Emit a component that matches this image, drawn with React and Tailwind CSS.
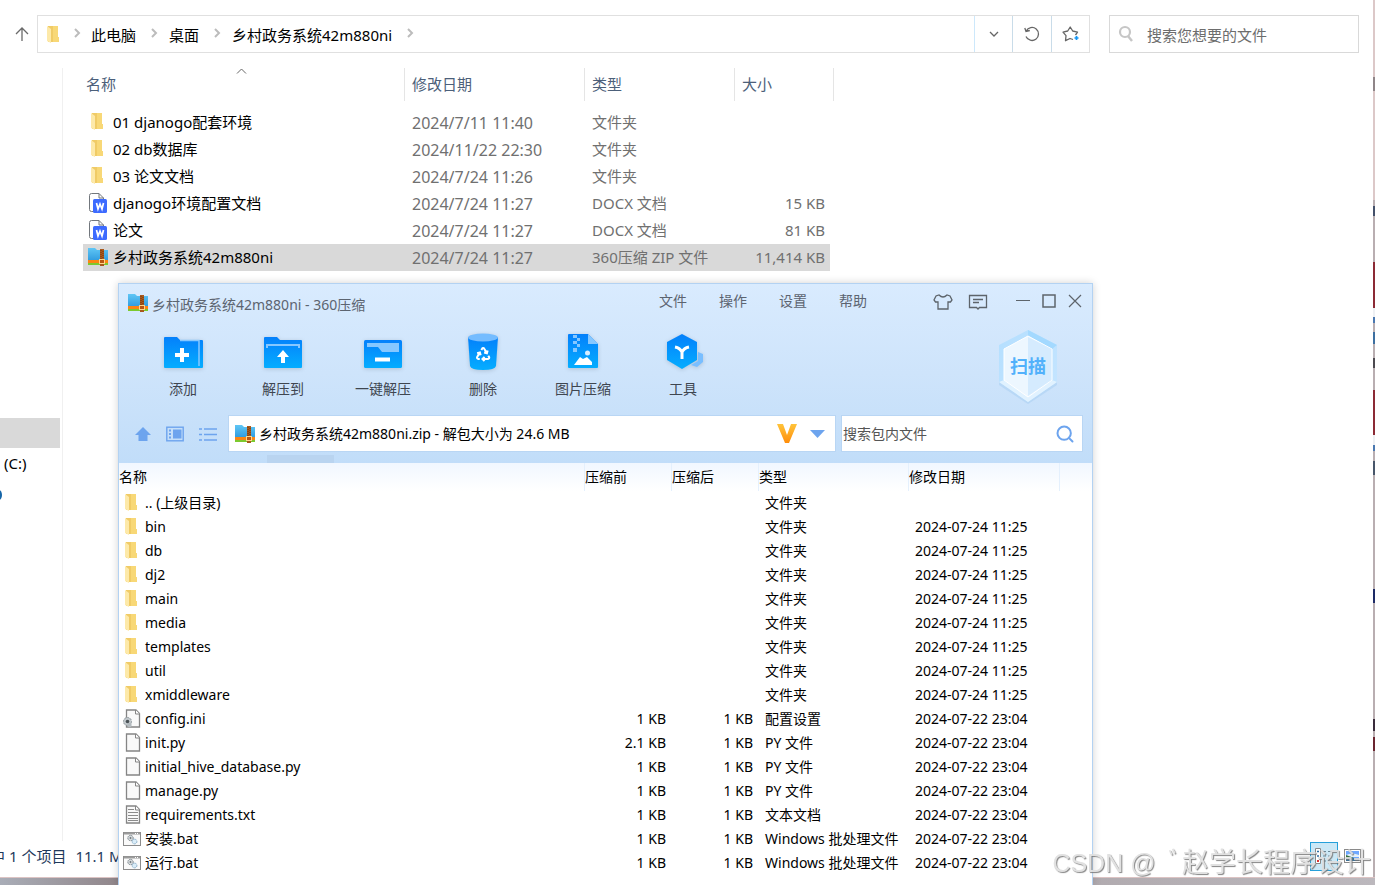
import React, { useState } from 'react';
import { Search } from 'lucide-react';

const explorerRows = [
  { icon: 'folder', name: '01 djanogo配套环境', date: '2024/7/11 11:40', type: '文件夹', size: '' },
  { icon: 'folder', name: '02 db数据库', date: '2024/11/22 22:30', type: '文件夹', size: '' },
  { icon: 'folder', name: '03 论文文档', date: '2024/7/24 11:26', type: '文件夹', size: '' },
  { icon: 'word', name: 'djanogo环境配置文档', date: '2024/7/24 11:27', type: 'DOCX 文档', size: '15 KB' },
  { icon: 'word', name: '论文', date: '2024/7/24 11:27', type: 'DOCX 文档', size: '81 KB' },
  { icon: 'zip', name: '乡村政务系统42m880ni', date: '2024/7/24 11:27', type: '360压缩 ZIP 文件', size: '11,414 KB' },
];

const folder = (name, date = '2024-07-24 11:25') => ({ icon: 'folder', name, before: '', after: '', type: '文件夹', date });
const file = (icon, name, type, before = '1 KB') => ({ icon, name, before, after: '1 KB', type, date: '2024-07-22 23:04' });

const archiveRows = [
  folder('.. (上级目录)', ''),
  folder('bin'),
  folder('db'),
  folder('dj2'),
  folder('main'),
  folder('media'),
  folder('templates'),
  folder('util'),
  folder('xmiddleware'),
  file('config', 'config.ini', '配置设置'),
  file('page', 'init.py', 'PY 文件', '2.1 KB'),
  file('page', 'initial_hive_database.py', 'PY 文件'),
  file('page', 'manage.py', 'PY 文件'),
  file('text', 'requirements.txt', '文本文档'),
  file('bat', '安装.bat', 'Windows 批处理文件'),
  file('bat', '运行.bat', 'Windows 批处理文件'),
];

function FolderIcon() {
  return (
    <svg width="14" height="18" viewBox="0 0 14 18">
      <path d="M1 0H11V11H12V16H1z" fill="#f8d877" />
      <path d="M1 0H6V16H1z" fill="#f0cb66" />
      <path d="M0 0L4 3V17L0 15z" fill="#fde9a9" />
    </svg>
  );
}

function WordIcon() {
  return (
    <svg width="19" height="20" viewBox="0 0 19 20">
      <path d="M5 18.500H2.500Q.500 18.500.500 16.500V2.500Q.500.500 2.500.500H10L14.500 5V7" fill="#fff" stroke="#72777d" />
      <path d="M10 .5V5H14.500" fill="none" stroke="#72777d" />
      <rect x="4" y="6" width="14" height="14" rx="1.500" fill="#3d6bff" />
      <path d="M7.500 10L9 16L11 11L13 16L14.500 10" fill="none" stroke="#fff" strokeWidth="1.700" />
    </svg>
  );
}

function ZipIcon() {
  return (
    <svg width="20" height="19" viewBox="0 0 20 19">
      <defs>
        <linearGradient id="zipBlue" x1="0" y1="0" x2="0" y2="1">
          <stop offset="0" stopColor="#5fc6f5" />
          <stop offset="1" stopColor="#2f9ade" />
        </linearGradient>
      </defs>
      <path d="M0 1H7L9 3H20V14H0z" fill="url(#zipBlue)" />
      <path d="M0 13H20V16H0z" fill="#fb8512" />
      <path d="M0 16H20V18H0z" fill="#7cc92e" />
      <rect x="12" y="2" width="4" height="17" fill="#a8581c" />
      <path d="M13 3V12M15 4V12" stroke="#703509" strokeDasharray="1 1" />
      <rect x="11.500" y="12.500" width="5" height="4" fill="#b95612" stroke="#ffd68a" />
    </svg>
  );
}

function PageIcon({ kind }) {
  return (
    <svg width="18" height="19" viewBox="0 0 18 19" className="mb-0.5">
      <path d="M3.500 1H13L16.500 4.500V18H3.500z" fill="#f9f9f9" stroke="#858585" strokeWidth="1.300" />
      <path d="M12.500 1V5H16.500" fill="#fff" stroke="#858585" />
      {kind === 'text' && <path d="M5 4.500H11M5 7.500H15M5 10.500H15M5 13.500H15M5 15.500H15" stroke="#8b8b8b" />}
      {kind === 'config' && (
        <g>
          <circle cx="4.500" cy="12.500" r="4" fill="#c3c9cd" stroke="#8d969b" strokeDasharray="2 1" />
          <circle cx="4.500" cy="12.500" r="1.800" fill="#4a5256" />
          <circle cx="6.500" cy="16" r="2.200" fill="#b4bbbf" />
        </g>
      )}
    </svg>
  );
}

function BatIcon() {
  return (
    <svg width="18" height="15" viewBox="0 0 18 15">
      <rect x=".5" y=".5" width="17" height="13" fill="#fafafa" stroke="#8c8c8c" />
      <path d="M1 1.500H17" stroke="#9b9b9b" strokeWidth="2" />
      <path d="M12 1.500H16" stroke="#fff" strokeDasharray="1 1" />
      <circle cx="7.500" cy="6" r="2.700" fill="#d4d9dc" stroke="#7d868b" strokeDasharray="1.500 .7" />
      <circle cx="7.500" cy="6" r=".9" fill="#70797d" />
      <circle cx="11.500" cy="9.500" r="2.400" fill="#d9ecf8" stroke="#84aac6" strokeDasharray="1.500 .7" />
    </svg>
  );
}

function FileIcon({ icon }) {
  if (icon === 'folder') return <FolderIcon />;
  if (icon === 'word') return <WordIcon />;
  if (icon === 'zip') return <ZipIcon />;
  if (icon === 'bat') return <BatIcon />;
  return <PageIcon kind={icon} />;
}

function Crumb({ children }) {
  return (
    <span className="flex items-center gap-[14px]">
      <button className="text-black whitespace-nowrap">{children}</button>
      <CrumbArrow />
    </span>
  );
}

function CrumbArrow() {
  return (
    <svg width="8" height="10" viewBox="0 0 8 10" className="shrink-0 mb-1">
      <path d="M2 1L6 5L2 9" fill="none" stroke="#bcbcbc" strokeWidth="2" />
    </svg>
  );
}

function AddressBar() {
  return (
    <div className="h-[68px] pt-[15px] pr-[14px] flex shrink-0 text-[15px]">
      <button aria-label="上移" className="w-[37px] h-[38px] pl-[15px]">
        <svg width="14" height="16" viewBox="0 0 14 16">
          <path d="M7 15V2M1 8L7 2L13 8" fill="none" stroke="#6a6a6a" strokeWidth="1.300" />
        </svg>
      </button>
      <div className="flex-1 h-[38px] flex border border-[#e0e0e0]">
        <div className="flex-1 flex items-center pl-[9px] pt-[2px]">
          <FolderIcon />
          <span className="w-[12px]" />
          <CrumbArrow />
          <span className="flex items-center gap-[11px] pl-[10px]">
            <Crumb>此电脑</Crumb>
            <Crumb>桌面</Crumb>
            <Crumb>乡村政务系统42m880ni</Crumb>
          </span>
        </div>
        <button aria-label="历史记录" className="w-[38px] border-l border-[#cde8fb] grid place-items-center">
          <svg width="10" height="6" viewBox="0 0 10 6">
            <path d="M1 1L5 5L9 1" fill="none" stroke="#666" strokeWidth="1.300" />
          </svg>
        </button>
        <button aria-label="刷新" className="w-[39px] border-l border-[#c9dce9] grid place-items-center">
          <svg width="16" height="16" viewBox="0 0 16 16">
            <path d="M2.200 5A6.500 6.500 0 1 1 2 10.500M.8 2L2 5.500L5.800 4.500" fill="none" stroke="#666" strokeWidth="1.300" />
          </svg>
        </button>
        <button aria-label="收藏" className="w-[38px] border-l border-[#c9dce9] grid place-items-center">
          <svg width="18" height="16" viewBox="0 0 18 16">
            <path d="M11 13.500L8 12.500L3.500 14.700L4 9.700L1 6.200L5.700 5L8.200 1L10.700 5L15.500 6.200L13.500 9" fill="none" stroke="#666" strokeWidth="1.300" strokeLinejoin="round" />
            <path d="M14.500 10V14M12.500 12H16.500" stroke="#1296f5" strokeWidth="1.700" />
          </svg>
        </button>
      </div>
      <label className="ml-[19px] w-[250px] h-[38px] flex items-center border border-[#d9d9d9]">
        <svg width="16" height="18" viewBox="0 0 16 18" className="ml-[8px] shrink-0">
          <circle cx="7" cy="7" r="5" fill="none" stroke="#c6c6c6" strokeWidth="2.200" />
          <path d="M10 11L14 16" stroke="#c6c6c6" strokeWidth="2.400" />
        </svg>
        <input
          aria-label="搜索您想要的文件"
          placeholder="搜索您想要的文件"
          className="min-w-0 flex-1 ml-[13px] pt-[2px] outline-none placeholder:text-[#6d6d6d]"
        />
      </label>
    </div>
  );
}

function ExplorerTable() {
  return (
    <table className="ml-[20px] w-[751px] table-fixed border-separate border-spacing-0 text-[15px] self-start">
      <colgroup>
        <col className="w-[322px]" />
        <col className="w-[180px]" />
        <col className="w-[150px]" />
        <col />
      </colgroup>
      <thead>
        <tr className="h-[33px] text-left text-[#4c607a]">
          <th className="relative p-0 pl-[3px] border-r border-[#e5e5e5] font-normal">
            名称
            <svg width="11" height="6" viewBox="0 0 11 6" className="absolute left-[153px] top-0">
              <path d="M1 5.500L5.500 1L10 5.500" fill="none" stroke="#666" />
            </svg>
          </th>
          <th className="p-0 pl-[7px] border-r border-[#e5e5e5] font-normal">修改日期</th>
          <th className="p-0 pl-[7px] border-r border-[#e5e5e5] font-normal">类型</th>
          <th className="p-0 pl-[7px] border-r border-[#e5e5e5] font-normal">大小</th>
        </tr>
        <tr className="h-[8px]"><td colSpan={4} className="p-0" /></tr>
      </thead>
      <tbody className="text-[#707070]">
        {explorerRows.map((row) => (
          <tr key={row.name} className={row.icon === 'zip' ? 'h-[27px] bg-[#d9d9d9]' : 'h-[27px]'}>
            <td className="p-0">
              <span className="flex items-center text-black whitespace-nowrap">
                <span className="w-[30px] flex justify-center mb-[2px] shrink-0"><FileIcon icon={row.icon} /></span>
                {row.name}
              </span>
            </td>
            <td className="p-0 pl-[7px] text-[16px] leading-5">{row.date}</td>
            <td className="p-0 pl-[7px] whitespace-nowrap">{row.type}</td>
            <td className="p-0 pr-[5px] text-right border-r-4 border-white">{row.size}</td>
          </tr>
        ))}
      </tbody>
    </table>
  );
}

function StatusBar() {
  return (
    <div className="h-9 shrink-0 flex items-center justify-between overflow-hidden pr-[12px] text-[15px] text-[#1e395b]">
      <div className="flex gap-[9px] -ml-[10px] whitespace-nowrap pb-[6px]">
        <span>中 1 个项目</span>
        <span>11.1 MB</span>
      </div>
      <div className="flex items-center gap-[6px] pb-[6px]">
        <button aria-label="详细信息" className="w-[28px] h-[29px] grid place-items-center bg-[#cbe8f6] border border-[#26a0da]">
          <svg width="18" height="17" viewBox="0 0 18 17">
            <path d="M.5.500H5.500V15.500H.500z" fill="#fff" stroke="#888" />
            <path d="M2 3.500H4M2 8H4" stroke="#2d6fa5" strokeWidth="1.500" />
            <path d="M2 13H4" stroke="#d33" strokeWidth="2" />
            <path d="M8 3.500H11M13 3.500H17M8 8H11M13 8H17M8 13H11M13 13H17" stroke="#6d8796" />
          </svg>
        </button>
        <button aria-label="大图标">
          <svg width="17" height="14" viewBox="0 0 17 14">
            <rect x=".5" y=".5" width="16" height="13" fill="#fff" stroke="#8a8a8a" />
            <rect x="2" y="2" width="13" height="10" fill="#6fa8ff" />
            <path d="M2 6Q8 3 15 6V8H2z" fill="#e4f1fa" />
            <path d="M2 6L10 9L2 10z" fill="#37703f" />
            <path d="M2 9H15V12H2z" fill="#3c7298" />
          </svg>
        </button>
      </div>
    </div>
  );
}

function Explorer() {
  return (
    <section className="flex-1 min-w-0 flex flex-col bg-white">
      <AddressBar />
      <div className="flex-1 min-h-0 flex overflow-hidden">
        <nav className="w-[63px] shrink-0 border-r border-[#f0f0f0] pt-[350px] text-[15px] text-black">
          <div className="h-[30px] mr-[2px] bg-[#d9d9d9]" />
          <a href="#c" className="block h-[30px] pl-[4px] pt-[4px]">(C:)</a>
          <svg width="2" height="12" viewBox="0 0 2 12" className="mt-[11px]">
            <ellipse cx="-1" cy="6" rx="3" ry="5" fill="#1565a8" />
          </svg>
        </nav>
        <ExplorerTable />
      </div>
      <StatusBar />
    </section>
  );
}

const tools = [
  {
    label: '添加',
    icon: (
      <g>
        <path d="M2 6Q2 5 3 5H15L18 8H40Q41 8 41 9V35Q41 36 40 36H3Q2 36 2 35z" fill="url(#toolBlue)" />
        <path d="M18 8.500H37V34" fill="none" stroke="#86c7ff" strokeWidth="1.500" />
        <path d="M20 16V30M13 23H27" stroke="#fff" strokeWidth="4" />
      </g>
    ),
  },
  {
    label: '解压到',
    icon: (
      <g>
        <path d="M2 6Q2 5 3 5H15L18 8H39Q40 8 40 9V35Q40 36 39 36H3Q2 36 2 35z" fill="url(#toolBlue)" />
        <path d="M5 16V13H37V16" fill="none" stroke="#86c7ff" strokeWidth="2" />
        <path d="M21 18L27 25H23V31H19V25H15z" fill="#fff" />
      </g>
    ),
  },
  {
    label: '一键解压',
    icon: (
      <g>
        <rect x="2" y="8" width="38" height="28" rx="1.500" fill="url(#toolBlue)" />
        <path d="M5 11H37V20H20L16 15H5z" fill="#86c7ff" />
        <path d="M13 27.500H28" stroke="#fff" strokeWidth="4" />
      </g>
    ),
  },
  {
    label: '删除',
    icon: (
      <g>
        <path d="M6 5H36L34 34Q33 38 21 38Q9 38 8 34z" fill="url(#toolBlue)" />
        <ellipse cx="21" cy="5.500" rx="15" ry="4" fill="#74bcff" />
        <g transform="translate(13 14) scale(.68)" fill="none" stroke="#fff" strokeWidth="3">
          <path d="M7 19H4.800a1.800 1.800 0 0 1-1.600-2.700L7.200 9.500M11 19h8.200a1.800 1.800 0 0 0 1.500-2.700l-1.200-2M14 16l-3 3 3 3M8.300 13.600L7.200 9.500 3.100 10.600M9.300 5.800l1.100-1.900a1.800 1.800 0 0 1 3.200 0l3.900 6.800M13.400 9.600l4.100 1.100 1.100-4.100" />
        </g>
      </g>
    ),
  },
  {
    label: '图片压缩',
    icon: (
      <g>
        <path d="M6 3Q6 2 7 2H26L36 12V35Q36 36 35 36H7Q6 36 6 35z" fill="url(#toolBlue)" />
        <path d="M26 2L36 12H26z" fill="#86c7ff" />
        <path d="M11 3H15V6H11zM15 6H18V9H15zM11 9H15V12H11zM15 12H18V15H15zM11 16H15V20H11z" fill="#86c7ff" />
        <path d="M12 33L18 25L21 27L25 25L30 30V33z" fill="#fff" />
        <circle cx="25.500" cy="21" r="2.500" fill="#d7edff" />
      </g>
    ),
  },
  {
    label: '工具',
    icon: (
      <g>
        <path d="M36 20L41 22V30L35 35L29 33L36 29z" fill="#79beff" />
        <path d="M20 2L35 10V28L20 37L5 28V10z" fill="url(#toolBlue)" />
        <path d="M13 15Q18 16 20 20Q22 16 27 15M20 19V27" fill="none" stroke="#fff" strokeWidth="3" />
      </g>
    ),
  },
];

function TitleBar() {
  return (
    <div className="h-9 shrink-0 flex items-center pl-[9px] pr-[10px] text-[14px] text-[#5c6470]">
      <ZipIcon />
      <span className="ml-[4px] pt-[4px] whitespace-nowrap">乡村政务系统42m880ni - 360压缩</span>
      <div className="ml-auto mr-[66px] pb-[4px] flex gap-8 whitespace-nowrap">
        <button>文件</button>
        <button>操作</button>
        <button>设置</button>
        <button>帮助</button>
      </div>
      <div className="flex items-center text-[#5d646b]">
        <button aria-label="皮肤" className="mr-[15px]">
          <svg width="20" height="16" viewBox="0 0 20 16" fill="none" stroke="currentColor" strokeWidth="1.300">
            <path d="M6 1Q10 5 14 1L17 2L19 6L17.500 8H15V15H5V8H2.500L1 6L3 2z" />
          </svg>
        </button>
        <button aria-label="反馈" className="mr-[28px]">
          <svg width="20" height="16" viewBox="0 0 20 16" fill="none" stroke="currentColor" strokeWidth="1.300">
            <path d="M1.500 1.500H18.500V13.500H11.500L10 15L8.500 13.500H1.500zM5 5.500H15M5 8.500H11" />
          </svg>
        </button>
        <div className="flex gap-[12px] pb-[2px]">
          <button aria-label="最小化">
            <svg width="14" height="14" viewBox="0 0 14 14"><path d="M0 6.500H14" stroke="currentColor" /></svg>
          </button>
          <button aria-label="最大化">
            <svg width="14" height="14" viewBox="0 0 14 14" fill="none"><rect x="1" y="1" width="12" height="12" stroke="currentColor" strokeWidth="1.500" /></svg>
          </button>
          <button aria-label="关闭">
            <svg width="14" height="14" viewBox="0 0 14 14"><path d="M1 1L13 13M13 1L1 13" stroke="currentColor" strokeWidth="1.200" /></svg>
          </button>
        </div>
      </div>
    </div>
  );
}

function Toolbar() {
  return (
    <div className="h-[95px] shrink-0 flex justify-between pl-[14px] pr-[30px] text-[14px] text-[#3f4650]">
      <div className="flex">
        {tools.map((tool) => (
          <button key={tool.label} className="w-[100px] pt-[12px] flex flex-col items-center gap-[5px]">
            <svg width="42" height="42" viewBox="0 0 42 42" className="drop-shadow-sm">
              <defs>
                <linearGradient id="toolBlue" x1="0" y1="0" x2="0" y2="1">
                  <stop offset="0" stopColor="#0480fb" />
                  <stop offset="1" stopColor="#05adff" />
                </linearGradient>
              </defs>
              {tool.icon}
            </svg>
            <span className="leading-5">{tool.label}</span>
          </button>
        ))}
      </div>
      <button className="relative w-[68px] h-[92px] text-[18px] font-bold text-[#52b1fb]">
        <svg width="68" height="92" viewBox="0 0 68 92" className="absolute inset-0">
          <defs>
            <linearGradient id="hexEdge" x1="0" y1="0" x2="1" y2="1">
              <stop offset="0" stopColor="#b4dfff" />
              <stop offset="1" stopColor="#c6e5ff" />
            </linearGradient>
          </defs>
          <path d="M34 14L63 29V65L34 84L5 65V29z" fill="#a5cdf2" opacity=".5" />
          <path d="M34 10L63 25V62L34 82L5 62V25z" fill="url(#hexEdge)" />
          <path d="M34 10L63 25L58 29L34 16z" fill="#a3d9ff" />
          <path d="M5 62L34 82L63 62L58 60L34 76L10 60z" fill="#e6f4ff" opacity=".85" />
          <path d="M34 16L58 29V60L34 77L10 60V29z" fill="#edf7ff" stroke="#fff" />
          <path d="M34 17L57.500 29V60L34 76z" fill="#c7e5fe" opacity=".65" />
        </svg>
        <span className="relative">扫描</span>
      </button>
    </div>
  );
}

function ArchiveAddress() {
  const [path, setPath] = useState('乡村政务系统42m880ni.zip - 解包大小为 24.6 MB');

  return (
    <div className="shrink-0 flex items-center pl-4 pr-[9px] text-[14px]">
      <button aria-label="向上">
        <svg width="16" height="16" viewBox="0 0 16 16"><path d="M8 1L16 9H12.500V15H3.500V9H0z" fill="#6da4ee" /></svg>
      </button>
      <button aria-label="预览" className="ml-[15px]">
        <svg width="18" height="16" viewBox="0 0 18 16">
          <rect x=".8" y="1.200" width="16.400" height="13.600" fill="none" stroke="#6da4ee" strokeWidth="1.400" />
          <path d="M7 3.500H15.500V12.500H7zM3 3.500H5V5.500H3zM3 7H5V9H3zM3 10.500H5V12.500H3z" fill="#6da4ee" />
        </svg>
      </button>
      <button aria-label="列表" className="ml-[15px] mr-[11px]">
        <svg width="18" height="16" viewBox="0 0 18 16">
          <path d="M0 3H3M5 3H18M0 8.500H3M5 8.500H18M0 14H3M5 14H18" stroke="#6da4ee" strokeWidth="1.700" />
        </svg>
      </button>
      <div className="flex-1 h-[37px] flex items-center border border-[#b9d6f4] bg-white pl-[6px] pr-[10px]">
        <ZipIcon />
        <input
          aria-label="路径"
          value={path}
          onChange={(e) => setPath(e.target.value)}
          className="min-w-0 flex-1 ml-[4px] text-black outline-none"
        />
        <svg width="20" height="19" viewBox="0 0 20 19">
          <defs>
            <linearGradient id="vGold" x1="0" y1="0" x2="0" y2="1">
              <stop offset="0" stopColor="#ffc43b" />
              <stop offset="1" stopColor="#ff8d0a" />
            </linearGradient>
          </defs>
          <path d="M0 0H6L10 11L14 0H20L12 19H8z" fill="url(#vGold)" />
        </svg>
        <button aria-label="展开" className="ml-[13px]">
          <svg width="15" height="8" viewBox="0 0 15 8"><path d="M0 0H15L7.500 8z" fill="#6da4ee" /></svg>
        </button>
      </div>
      <label className="ml-[5px] w-[242px] h-[37px] flex items-center border border-[#b9d6f4] bg-white pr-[7px]">
        <input
          aria-label="搜索包内文件"
          placeholder="搜索包内文件"
          className="min-w-0 flex-1 pl-[1px] outline-none placeholder:text-[#555]"
        />
        <Search size={20} strokeWidth={2.4} color="#6da4ee" />
      </label>
    </div>
  );
}

function ArchiveTable() {
  return (
    <table className="w-full table-fixed border-separate border-spacing-0 text-[14px] leading-5 text-black whitespace-nowrap">
      <colgroup>
        <col className="w-[466px]" />
        <col className="w-[87px]" />
        <col className="w-[87px]" />
        <col className="w-[150px]" />
        <col className="w-[151px]" />
        <col />
      </colgroup>
      <thead>
        <tr className="h-[28px] text-left bg-linear-to-b from-[#f1f7ff] to-white">
          <th className="p-0 font-normal border-r border-[#e4f0fd]">名称</th>
          <th className="p-0 font-normal border-r border-[#e4f0fd]">压缩前</th>
          <th className="p-0 font-normal border-r border-[#e4f0fd]">压缩后</th>
          <th className="p-0 font-normal border-r border-[#e4f0fd]">类型</th>
          <th className="p-0 font-normal border-r border-[#e4f0fd]">修改日期</th>
          <th className="p-0" />
        </tr>
      </thead>
      <tbody>
        {archiveRows.map((row) => (
          <tr key={row.name} className="h-6">
            <td className="p-0">
              <span className="flex items-center">
                <span className="w-[26px] flex justify-center"><FileIcon icon={row.icon} /></span>
                {row.name}
              </span>
            </td>
            <td className="p-0 pr-[6px] text-right">{row.before}</td>
            <td className="p-0 pr-[6px] text-right">{row.after}</td>
            <td className="p-0 pl-[6px]">{row.type}</td>
            <td className="p-0 pl-[6px]">{row.date}</td>
            <td className="p-0" />
          </tr>
        ))}
      </tbody>
    </table>
  );
}

function ArchiveWindow() {
  return (
    <section className="absolute left-[118px] right-[282px] top-[283px] bottom-0 flex flex-col overflow-hidden bg-white border border-b-0 border-[#b3d2f2] shadow-[0_0_8px_rgba(0,0,0,0.18)]">
      <header className="shrink-0 flex flex-col bg-linear-to-b from-[#d9ebfe] via-[#cee4fb] to-[#c1ddf9]">
        <TitleBar />
        <Toolbar />
        <ArchiveAddress />
        <div className="h-[11px] flex items-end pl-[148px]">
          <div className="w-[67px] h-2 bg-[#b9d4f0]" />
        </div>
      </header>
      <ArchiveTable />
    </section>
  );
}

// sliver of wallpaper and desktop icons beside the explorer
function DesktopEdge() {
  return (
    <svg width="2" height="885" viewBox="0 0 2 885" className="shrink-0">
      <rect width="2" height="885" fill="#b9aeb1" />
      <rect width="2" height="200" fill="#dcc8c8" />
      <rect y="77" width="2" height="14" fill="#8f8588" />
      <rect y="206" width="2" height="10" fill="#43506a" />
      <rect y="262" width="2" height="46" fill="#8c2a35" />
      <rect y="308" width="2" height="9" fill="#eef0f3" />
      <rect y="317" width="2" height="6" fill="#4a78b0" />
      <rect y="332" width="2" height="12" fill="#3c6fa0" />
      <rect y="358" width="2" height="10" fill="#4c4a50" />
      <rect y="390" width="2" height="45" fill="#8c2a35" />
      <rect y="435" width="2" height="10" fill="#eef0f3" />
      <rect y="445" width="2" height="6" fill="#4a78b0" />
      <rect y="461" width="2" height="14" fill="#47566a" />
      <rect y="589" width="2" height="14" fill="#1d2a66" />
      <rect y="719" width="2" height="12" fill="#3a2c3c" />
      <rect y="737" width="2" height="14" fill="#6b2530" />
    </svg>
  );
}

export default function App() {
  return (
    <main className="relative h-screen overflow-hidden flex flex-col bg-[#a79fa5] font-['Noto_Sans','Noto_Sans_CJK_SC',sans-serif]">
      <div className="flex-1 min-h-0 flex overflow-hidden">
        <Explorer />
        <DesktopEdge />
      </div>
      <div className="h-2 shrink-0 border-t border-[#dcc3c3] bg-linear-to-r from-[#a9adb7] via-[#8d8083] via-10% to-[#bcb8bd]" />
      <ArchiveWindow />
      <div className="absolute right-[4px] bottom-[4px] flex items-center gap-[6px] whitespace-pre text-[27px] leading-9 text-[#dedede] opacity-90 [text-shadow:1px_1px_1px_#777] font-['Liberation_Sans','Noto_Sans_CJK_SC',sans-serif]">
        <span className="text-[25px]">CSDN @ </span>
        <span>ﾞ赵学长程序设计</span>
      </div>
    </main>
  );
}
